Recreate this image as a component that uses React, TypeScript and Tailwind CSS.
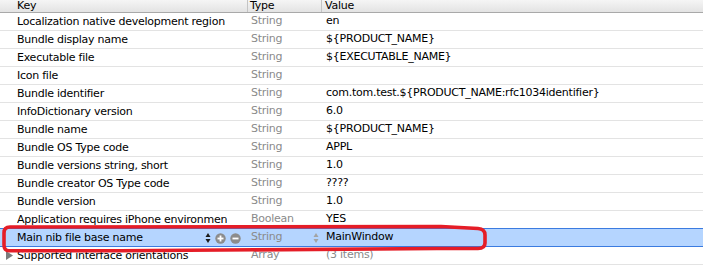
import React from "react";

type Row = { key: string; type: string; value: string; valueGray?: boolean; selected?: boolean; disclosure?: boolean };

const rows: Row[] = [
  { key: "Localization native development region", type: "String", value: "en" },
  { key: "Bundle display name", type: "String", value: "${PRODUCT_NAME}" },
  { key: "Executable file", type: "String", value: "${EXECUTABLE_NAME}" },
  { key: "Icon file", type: "String", value: "" },
  { key: "Bundle identifier", type: "String", value: "com.tom.test.${PRODUCT_NAME:rfc1034identifier}" },
  { key: "InfoDictionary version", type: "String", value: "6.0" },
  { key: "Bundle name", type: "String", value: "${PRODUCT_NAME}" },
  { key: "Bundle OS Type code", type: "String", value: "APPL" },
  { key: "Bundle versions string, short", type: "String", value: "1.0" },
  { key: "Bundle creator OS Type code", type: "String", value: "????" },
  { key: "Bundle version", type: "String", value: "1.0" },
  { key: "Application requires iPhone environment", type: "Boolean", value: "YES" },
  { key: "Main nib file base name", type: "String", value: "MainWindow", selected: true },
  { key: "Supported interface orientations", type: "Array", value: "(3 items)", valueGray: true, disclosure: true },
];

function UpDown({ color }: { color: string }) {
  return (
    <svg width="6" height="12" viewBox="0 0 6 12" className="block">
      <path d="M3 1 L5.5 5 L0.5 5 Z" fill={color} />
      <path d="M3 11 L5.5 7 L0.5 7 Z" fill={color} />
    </svg>
  );
}

function CircleBtn({ minus }: { minus?: boolean }) {
  return (
    <svg width="11" height="11" viewBox="0 0 11 11" className="block">
      <circle cx="5.5" cy="5.5" r="5.2" fill="#8c8c8c" />
      <rect x="2.5" y="4.6" width="6" height="1.8" fill="#ffffff" />
      {!minus && <rect x="4.6" y="2.5" width="1.8" height="6" fill="#ffffff" />}
    </svg>
  );
}

export default function App() {
  return (
    <div
      className="relative w-[703px] h-[277px] overflow-hidden bg-white text-[11px] tracking-[-0.25px] text-black"
      style={{ fontFamily: '"DejaVu Sans", "Lucida Grande", sans-serif' }}
    >
      {/* Header */}
      <div className="grid grid-cols-[248px_74px_1fr] h-[13px] border-b border-[#a9a9a9] bg-gradient-to-b from-[#f5f5f5] to-[#e3e3e3]">
        <div className="pl-[17px] h-[12px] leading-[11px] border-r border-[#c4c4c4]">Key</div>
        <div className="pl-[2px] h-[12px] leading-[11px] border-r border-[#c4c4c4]">Type</div>
        <div className="pl-[3px] h-[12px] leading-[11px]">Value</div>
      </div>

      {/* Rows */}
      {rows.map((r, i) => {
        const nextSelected = rows[i + 1]?.selected;
        const borderColor = r.selected || nextSelected ? "border-[#3b7be0]" : "border-[#e3e3e3]";
        return (
          <div
            key={i}
            className={`grid grid-cols-[248px_74px_1fr] h-[18px] border-b ${borderColor} ${r.selected ? "bg-[#b5d5ff]" : "bg-white"}`}
          >
            <div className="relative flex items-center h-[17px]">
              {r.disclosure && (
                <svg width="7" height="9" viewBox="0 0 7 9" className="absolute left-[6px] top-[4px]">
                  <path d="M0 0 L7 4.5 L0 9 Z" fill="#7b7b7b" />
                </svg>
              )}
              <div className="ml-[17px] w-[210px] overflow-hidden whitespace-nowrap leading-[15px]">{r.key}</div>
              {r.selected && (
                <div className="absolute left-[205px] top-[3px] flex items-center gap-[4px]">
                  <UpDown color="#1a1a1a" />
                  <CircleBtn />
                  <CircleBtn minus />
                </div>
              )}
            </div>
            <div className="relative h-[17px] pl-[3px] leading-[15px] text-[#8a8a8a] whitespace-nowrap">
              {r.type}
              {r.selected && (
                <div className="absolute left-[65px] top-[3px]">
                  <UpDown color="#a3a3a3" />
                </div>
              )}
            </div>
            <div className={`h-[17px] pl-[4px] leading-[15px] whitespace-nowrap ${r.valueGray ? "text-[#8a8a8a]" : ""}`}>
              {r.value}
            </div>
          </div>
        );
      })}

      {/* Red annotation */}
      <svg className="absolute left-0 top-0 pointer-events-none" width="703" height="277" viewBox="0 0 703 277">
        <path
          d="M10 227 L441 226.5 L478 228.5 Q485 229 485 235 L485 243 Q485 248.5 478 248.5 L437 248.5 L120 250.8 L9 250.8 Q4 250.8 4 245 L4 233 Q4 227 10 227 Z"
          fill="none"
          stroke="#e51d27"
          strokeWidth="3.6"
          strokeLinejoin="round"
        />
      </svg>
    </div>
  );
}
